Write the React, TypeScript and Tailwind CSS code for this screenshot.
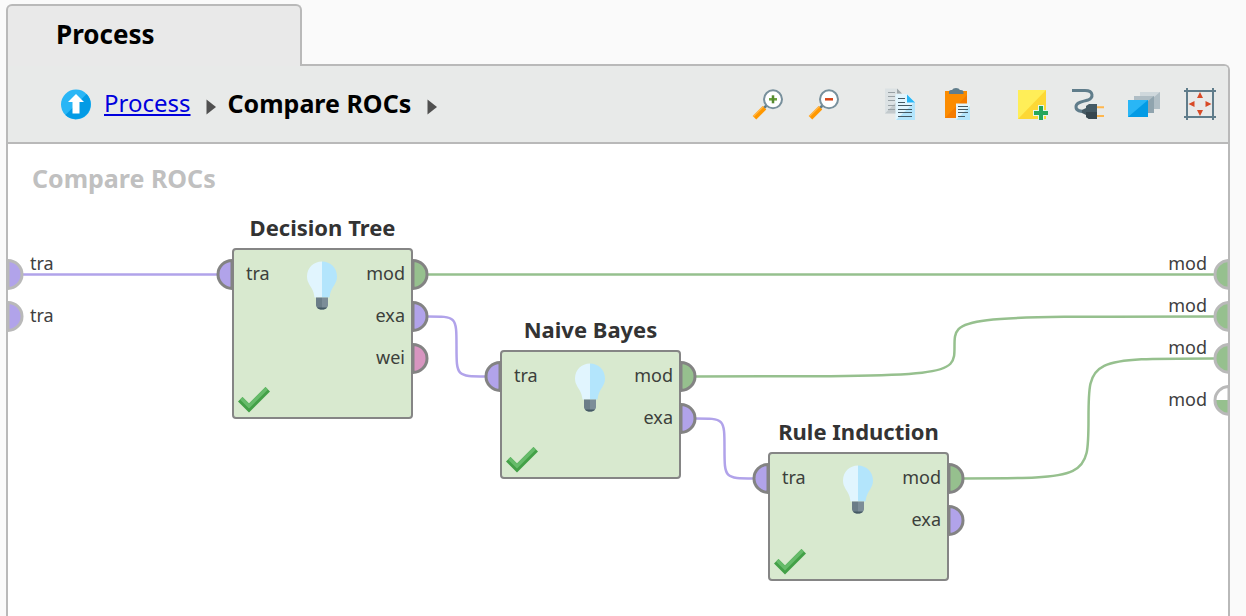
import { useLayoutEffect, useRef, useState, type ReactNode } from "react";

type Kind = "model" | "examples" | "weights";

const FILL: Record<Kind, string> = {
  model: "#96c08e",
  examples: "#b1a3ea",
  weights: "#d795c0",
};

interface PortInfo {
  label: string;
  kind: Kind;
}

interface Operator {
  name: string;
  x: number;
  y: number;
  inputs: PortInfo[];
  outputs: PortInfo[];
  height: number;
}

const OPERATORS: Operator[] = [
  {
    name: "Decision Tree",
    x: 224,
    y: 104,
    height: 171,
    inputs: [{ label: "tra", kind: "examples" }],
    outputs: [
      { label: "mod", kind: "model" },
      { label: "exa", kind: "examples" },
      { label: "wei", kind: "weights" },
    ],
  },
  {
    name: "Naive Bayes",
    x: 492,
    y: 206,
    height: 129,
    inputs: [{ label: "tra", kind: "examples" }],
    outputs: [
      { label: "mod", kind: "model" },
      { label: "exa", kind: "examples" },
    ],
  },
  {
    name: "Rule Induction",
    x: 760,
    y: 308,
    height: 129,
    inputs: [{ label: "tra", kind: "examples" }],
    outputs: [
      { label: "mod", kind: "model" },
      { label: "exa", kind: "examples" },
    ],
  },
];

function wirePath(x1: number, y1: number, x2: number, y2: number) {
  if (y1 === y2) return `M${x1} ${y1}H${x2}`;
  const mx = (x1 + x2) / 2;
  const my = (y1 + y2) / 2;
  return `M${x1} ${y1}C${mx} ${y1} ${mx} ${y1} ${mx} ${my}S${mx} ${y2} ${x2} ${y2}`;
}

function Port({ kind, side, stroke = "#838383", half = false }: { kind: Kind; side: "left" | "right"; stroke?: string; half?: boolean }) {
  const d = side === "left" ? "M17 2.4A14 14 0 0 0 17 30.4Z" : "M2 2.4A14 14 0 0 1 2 30.4Z";
  return (
    <svg width="19" height="32" viewBox="0 0 19 32" className="block" aria-hidden="true">
      <path d={d} fill={half ? "#ffffff" : FILL[kind]} />
      {half && <path d="M3 16A14 14 0 0 0 17 30V16Z" fill={FILL[kind]} />}
      <path d={d} fill="none" stroke={stroke} strokeWidth="3" />
    </svg>
  );
}

function Bulb() {
  return (
    <svg width="32" height="50" viewBox="0 0 32 50" aria-hidden="true">
      <path d="M16 1.500C7.500 1.500 1 8 1 16.500C1 21.500 3.500 24.500 5.500 28C7.500 31.500 8 34 8.500 37.500H16Z" fill="#e1f5fe" />
      <path d="M16 1.500C24.500 1.500 31 8 31 16.500C31 21.500 28.500 24.500 26.500 28C24.500 31.500 24 34 23.500 37.500H16Z" fill="#b3e5fc" />
      <path d="M10 37.500H16V49.500C12.500 49.500 10 47.500 10 45Z" fill="#6b7d88" />
      <path d="M16 37.500H22V45C22 47.500 19.500 49.500 16 49.500Z" fill="#7c8d98" />
      <path d="M11 47.500H21C20 49 18.500 49.500 16 49.500S12 49 11 47.500Z" fill="#455a64" />
    </svg>
  );
}

function Check() {
  return (
    <svg width="32" height="28" viewBox="0 0 32 28" aria-hidden="true">
      <path d="M0 15.500L4.500 11L11 17.500L27.500 1L32 5.500L11 26.500Z" fill="#43a047" />
      <path d="M2 13.500L4.500 11L11 17.500L27.500 1L30 3.500L11 22.500Z" fill="#66bb6a" />
    </svg>
  );
}

function OperatorNode({ op }: { op: Operator }) {
  return (
    <article className="absolute" style={{ left: op.x, top: op.y }}>
      <h3 className="absolute -inset-x-8 bottom-full mb-[5px] text-center text-[22px] leading-8 font-bold text-[#333333]">{op.name}</h3>
      <div
        className="flex w-[181px] justify-between rounded-[4px] border-2 border-[#858585] bg-[#d8e9cf] pt-[2px] text-[18px] leading-[42px] text-[#3c403b]"
        style={{ height: op.height }}
      >
        <ul className="pl-3">
          {op.inputs.map((p) => (
            <li key={p.label}>{p.label}</li>
          ))}
        </ul>
        <ul className="pr-[6px] text-right">
          {op.outputs.map((p) => (
            <li key={p.label}>{p.label}</li>
          ))}
        </ul>
      </div>
      <div className="absolute top-3 left-[74px]">
        <Bulb />
      </div>
      <div className="absolute bottom-[5px] left-[6px]">
        <Check />
      </div>
      <div className="absolute top-[10px] right-full -mr-[2px] flex flex-col gap-[10px]">
        {op.inputs.map((p) => (
          <Port key={p.label} kind={p.kind} side="left" />
        ))}
      </div>
      <div className="absolute top-[10px] left-full -ml-[2px] flex flex-col gap-[10px]">
        {op.outputs.map((p) => (
          <Port key={p.label} kind={p.kind} side="right" />
        ))}
      </div>
    </article>
  );
}

function Canvas() {
  const ref = useRef<HTMLElement>(null);
  const [width, setWidth] = useState(1220);
  useLayoutEffect(() => {
    const el = ref.current;
    if (!el) return;
    const measure = () => setWidth(el.clientWidth);
    measure();
    const observer = new ResizeObserver(measure);
    observer.observe(el);
    return () => observer.disconnect();
  }, []);
  const end = width - 14;
  const wires: { kind: Kind; d: string }[] = [
    { kind: "examples", d: wirePath(15, 130.4, 210, 130.4) },
    { kind: "model", d: wirePath(419, 130.4, end, 130.4) },
    { kind: "examples", d: wirePath(419, 172.4, 478, 232.4) },
    { kind: "model", d: wirePath(687, 232.4, end, 172.4) },
    { kind: "examples", d: wirePath(687, 274.4, 746, 334.4) },
    { kind: "model", d: wirePath(955, 334.4, end, 214.4) },
  ];
  return (
    <main ref={ref} className="relative min-h-[472px] flex-1 overflow-hidden bg-white">
      <h2 className="pt-4 pl-6 text-[25px] leading-9 font-bold text-[#c0c0c0]">Compare ROCs</h2>
      <svg className="absolute inset-0 size-full" fill="none" strokeWidth="2.500" aria-hidden="true">
        {wires.map((w) => (
          <path key={w.d} d={w.d} stroke={FILL[w.kind]} />
        ))}
      </svg>
      <div className="absolute top-[114px] -left-[2px] flex flex-col gap-[10px]">
        <Port kind="examples" side="right" stroke="#b9b9b9" />
        <Port kind="examples" side="right" stroke="#b9b9b9" />
      </div>
      <ul className="absolute top-[103px] left-[22px] text-[18px] leading-8 text-[#404040]">
        <li>tra</li>
        <li className="mt-5">tra</li>
      </ul>
      <div className="absolute top-[114px] -right-[3px] flex flex-col gap-[10px]">
        <Port kind="model" side="left" stroke="#b9b9b9" />
        <Port kind="model" side="left" stroke="#b9b9b9" />
        <Port kind="model" side="left" stroke="#b9b9b9" />
        <Port kind="model" side="left" stroke="#b9b9b9" half />
      </div>
      <ul className="absolute top-[103px] right-[21px] flex flex-col gap-[10px] text-[18px] leading-8 text-[#404040]">
        <li>mod</li>
        <li>mod</li>
        <li>mod</li>
        <li className="mt-[10px]">mod</li>
      </ul>
      {OPERATORS.map((op) => (
        <OperatorNode key={op.name} op={op} />
      ))}
    </main>
  );
}

function ToolButton({ label, children }: { label: string; children: ReactNode }) {
  return (
    <button type="button" aria-label={label} className="size-8">
      <svg width="32" height="32" viewBox="0 0 32 32" fill="none" aria-hidden="true">
        {children}
      </svg>
    </button>
  );
}

function Magnifier({ plus = false }: { plus?: boolean }) {
  return (
    <>
      <path d="M12 20L15 17" stroke="#607d8b" strokeWidth="2.500" />
      <path d="M2.500 29.800L12.500 19.800" stroke="#ff9800" strokeWidth="5" />
      <path d="M1.200 28.500L11.200 18.500" stroke="#ffb74d" strokeWidth="1.500" />
      <circle cx="21" cy="11.300" r="9" fill="#ffffff" stroke="#78909c" strokeWidth="2" />
      <path d="M17 11.300H25" stroke={plus ? "#689f38" : "#d84315"} strokeWidth="2.500" />
      {plus && <path d="M21 7.300V15.300" stroke="#558b2f" strokeWidth="2.500" />}
    </>
  );
}

function Crumb() {
  return (
    <svg width="10" height="16" viewBox="0 0 10 16" className="mt-[5px]" aria-hidden="true">
      <path d="M0.500 0.500L10 8L0.500 15.500Z" fill="#505050" />
    </svg>
  );
}

function Toolbar() {
  return (
    <header className="flex h-[78px] items-center justify-between rounded-tr-[4px] border-b-2 border-[#b9b9b9] bg-[#e8eae9] pr-3 pl-[53px]">
      <nav aria-label="Breadcrumb" className="flex items-center">
        <button type="button" aria-label="Up one level" className="mr-[13px]">
          <svg width="30" height="32" viewBox="0 0 30 32" aria-hidden="true">
            <circle cx="15" cy="16.500" r="15" fill="#29b6f6" />
            <path d="M25.600 5.900A15 15 0 0 1 4.400 27.100Z" fill="#039be5" />
            <path d="M15 6L23 14H18.500V25.500H11.500V14H7Z" fill="#ffffff" />
          </svg>
        </button>
        <a href="#process" className="mr-[15px] pb-[3px] text-[24px] leading-9 text-[#0000dd] underline decoration-2 underline-offset-2">
          Process
        </a>
        <Crumb />
        <strong className="mr-4 ml-3 pb-[3px] text-[25px] leading-9 font-bold text-black">Compare ROCs</strong>
        <Crumb />
      </nav>
      <div className="flex gap-11">
        <div className="flex gap-6">
          <ToolButton label="Zoom in">
            <Magnifier plus />
          </ToolButton>
          <ToolButton label="Zoom out">
            <Magnifier />
          </ToolButton>
        </div>
        <div className="flex gap-6">
          <ToolButton label="Copy">
            <path d="M1 0.500H13L18 5.500V25.500H1Z" fill="#dce2e4" />
            <path d="M1 25.500L18 8V25.500Z" fill="#c3cacd" />
            <path d="M13 0.500L18 5.500H13Z" fill="#9ea7aa" />
            <path d="M4 4.500H11M4 8.500H11M4 12.500H11M4 17.500H11M4 21.500H11" stroke="#98a1a5" strokeWidth="1.200" />
            <path d="M11.500 6H23L31 14V32H11.500Z" fill="#e1f5fe" />
            <path d="M12 32L31 13.500V32Z" fill="#b3e5fc" />
            <path d="M23 6.500L31 14.500H23Z" fill="#29b6f6" />
            <path d="M14 10.500H21M14 14.500H21M14 17.500H28M14 21.500H28M14 24.500H28M14 28.500H28" stroke="#455a64" strokeWidth="1.200" />
          </ToolButton>
          <ToolButton label="Paste">
            <path d="M5 3H27V30H5Z" fill="#fb8c00" />
            <path d="M5 30L27 7V30Z" fill="#f57c00" />
            <path d="M9 6V3.500Q9 2 11 2H12Q13 0 16 0T20 2H21Q23.500 2 23.500 4V6Z" fill="#607d8b" />
            <path d="M16 15.500H30V32H16Z" fill="#e1f5fe" />
            <path d="M16 32L30 18V32Z" fill="#b3e5fc" />
            <path d="M18 18.500H28M18 21.500H28M18 24.500H28M18 28.500H25" stroke="#455a64" strokeWidth="1.200" />
          </ToolButton>
        </div>
        <div className="flex gap-6">
          <ToolButton label="Add note">
            <path d="M2 2H30V31H2Z" fill="#ffee58" />
            <path d="M2 31L30 2V31Z" fill="#fdd835" />
            <path d="M25 17V33M17 25H33" stroke="#e8f5e9" strokeWidth="6" />
            <path d="M25 18V32M18 25H32" stroke="#26a65b" strokeWidth="4" />
          </ToolButton>
          <ToolButton label="Connect ports">
            <path d="M0 2.500H13C22 2.500 21.500 10 16 12C10 14 4 14 4 19C4 23 8 23.500 14 23.500" stroke="#607d8b" strokeWidth="3" />
            <path d="M25 19.300H32M25 28H32" stroke="#ffb74d" strokeWidth="2" />
            <path d="M10 22L14 20V18L17 16H25V31H17L14 29V27L10 25Z" fill="#455a64" />
            <path d="M14 24H25V31H17L14 29Z" fill="#37474f" />
          </ToolButton>
          <ToolButton label="Bring to front">
            <path d="M12 4H32V21H12Z" fill="#cfd8dc" />
            <path d="M12 21L32 4V21Z" fill="#b0bec5" />
            <path d="M6 8H26V25H6Z" fill="#b0bec5" />
            <path d="M6 25L26 8V25Z" fill="#90a4ae" />
            <path d="M0 12H20V29H0Z" fill="#29b6f6" />
            <path d="M0 29L20 12V29Z" fill="#039be5" />
          </ToolButton>
          <ToolButton label="Fit to window">
            <path d="M3 0V32M29 0V32M0 3H32M0 29H32" stroke="#607d8b" strokeWidth="2" />
            <path d="M16 4L19 10H13ZM16 28L19 22H13ZM4.500 16L10.500 13V19ZM27.500 16L21.500 13V19Z" fill="#d84a26" />
          </ToolButton>
        </div>
      </div>
    </header>
  );
}

export default function App() {
  return (
    <div className="flex min-h-screen flex-col bg-[#fafafa] pt-1 pr-4 pl-[6px] font-['Noto_Sans',sans-serif]">
      <div className="relative -mb-[2px] h-[62px] w-[296px] rounded-t-[6px] border-2 border-b-0 border-[#b9b9b9] bg-[#e9e9e9] pl-12">
        <h1 className="text-[26px] leading-[56px] font-bold text-black">Process</h1>
      </div>
      <div className="flex flex-1 flex-col rounded-tr-[6px] border-2 border-b-0 border-[#b9b9b9]">
        <Toolbar />
        <Canvas />
      </div>
    </div>
  );
}
